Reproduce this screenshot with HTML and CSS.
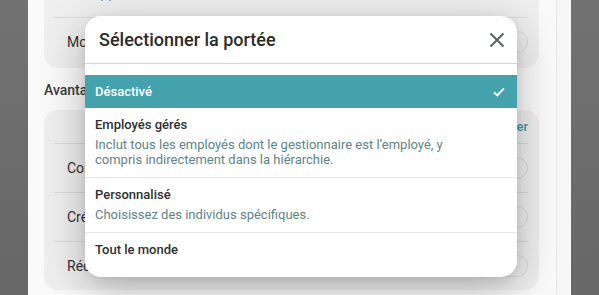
FILE: index.html
```html
<!doctype html>
<html>
<head>
    <meta charset="UTF-8">
    <title>Sélectionner la portée</title>
    <link rel="stylesheet" href="styles.css">
</head>
<body>
    <div class="backdrop"></div>
    <div class="sheet">
        <div class="content">
            <div class="card card-top">
                <div class="row row-first"><span class="hint">Les applications</span></div>
                <div class="row">
                    <span>Mode automatique</span>
                    <span class="toggle"></span>
                </div>
            </div>

            <div class="section-label">Avantages</div>

            <div class="card">
                <div class="row row-head"><a class="link">Tout activer</a></div>
                <div class="row">
                    <span>Congés</span>
                    <span class="toggle"></span>
                </div>
                <div class="row">
                    <span>Crédits</span>
                    <span class="toggle"></span>
                </div>
                <div class="row">
                    <span>Réductions</span>
                    <span class="toggle"></span>
                </div>
            </div>
        </div>
        <div class="scrollbar"></div>
    </div>
    <div class="backdrop"></div>

    <!-- scope picker dialog -->
    <div class="dialog">
        <div class="dialog-header">
            <h2>Sélectionner la portée</h2>
            <button class="close" aria-label="Fermer">
                <svg width="16" height="16" viewBox="0 0 16 16">
                    <path d="M1.5 1.5 L14.5 14.5 M14.5 1.5 L1.5 14.5" stroke="#5a6263" stroke-width="2" fill="none"/>
                </svg>
            </button>
        </div>
        <ul class="options">
            <li class="option selected">
                <span class="option-title">Désactivé</span>
                <svg class="check" width="12" height="10" viewBox="0 0 12 10">
                    <path d="M1 5.2 L4.3 8.4 L11 1.4" stroke="#fff" stroke-width="2" fill="none"/>
                </svg>
            </li>
            <li class="option">
                <div class="option-title">Employés gérés</div>
                <div class="option-desc">Inclut tous les employés dont le gestionnaire est l’employé, y compris indirectement dans la hiérarchie.</div>
            </li>
            <li class="option">
                <div class="option-title">Personnalisé</div>
                <div class="option-desc">Choisissez des individus spécifiques.</div>
            </li>
            <li class="option">
                <div class="option-title">Tout le monde</div>
            </li>
        </ul>
    </div>
</body>
</html>
```

FILE: styles.css
```css
body {
    margin: 0;
    height: 295px;
    display: flex;
    overflow: hidden;
    font-family: Roboto, "Liberation Sans", sans-serif;
    background: #6b6b6b;
}
.backdrop {
    width: 28px;
    background: linear-gradient(#727272, #676767);
}
.backdrop:last-of-type {
    width: 24px;
}
.sheet {
    flex: 1;
    display: flex;
    background: #fafafa;
}
.content {
    flex: 1;
    padding: 0 17px 0 16px;
}
.scrollbar {
    width: 14px;
    border-left: 1px solid #e6e6e6;
    background: #f7f7f7;
}
.card {
    background: #efefef;
    border-radius: 14px;
    padding: 0 11px 0 10px;
}
.card-top {
    margin-top: -32px;
    padding-bottom: 2px;
}
.row {
    height: 48px;
    display: flex;
    align-items: center;
    justify-content: space-between;
    padding: 0 0 0 13px;
    border-top: 1px solid #dadada;
    font-size: 14px;
    color: #333;
}
.row-first {
    height: 49px;
    border-top: none;
}
.hint {
    color: #888;
}
.row-head {
    height: 33px;
    border-top: none;
    justify-content: flex-end;
}
.link {
    color: #3d9aa4;
    font-weight: 500;
    font-size: 13px;
}
.toggle {
    width: 38px;
    height: 20px;
    border: 1.5px solid #d9d9d9;
    border-radius: 12px;
}
.section-label {
    height: 42px;
    line-height: 44px;
    font-size: 14px;
    font-weight: 500;
    color: #3a3a3a;
}

.dialog {
    position: absolute;
    left: 85px;
    top: 16px;
    width: 432px;
    padding-bottom: 8px;
    background: #fff;
    border-radius: 16px;
    box-shadow: 0 12px 44px rgba(0, 0, 0, 0.28), 0 2px 8px rgba(0, 0, 0, 0.08);
    overflow: hidden;
}
.dialog-header {
    height: 47px;
    display: flex;
    align-items: center;
    justify-content: space-between;
    padding: 0 12px 0 14px;
    border-bottom: 1px solid #d6d6d6;
}
.dialog-header h2 {
    margin: 0;
    font-size: 18px;
    font-weight: 500;
    color: #2b2b2b;
}
.close {
    border: none;
    background: none;
    padding: 0;
    display: flex;
}
.options {
    list-style: none;
    margin: 0;
    padding: 11px 0 0;
}
.option {
    padding: 8px 10px 10px;
    border-bottom: 1px solid #e6e6e6;
}
.option:last-child {
    border-bottom: none;
}
.option.selected {
    height: 33px;
    padding: 0 12px 0 10px;
    box-sizing: border-box;
    display: flex;
    align-items: center;
    justify-content: space-between;
    background: #43a2ab;
    border-bottom: none;
}
.option-title {
    font-size: 13px;
    line-height: 18px;
    font-weight: 500;
    color: #2f2f2f;
}
.selected .option-title {
    color: #fff;
}
.option-desc {
    max-width: 360px;
    margin-top: 3px;
    font-size: 13px;
    line-height: 15px;
    color: #5d8488;
}
```
